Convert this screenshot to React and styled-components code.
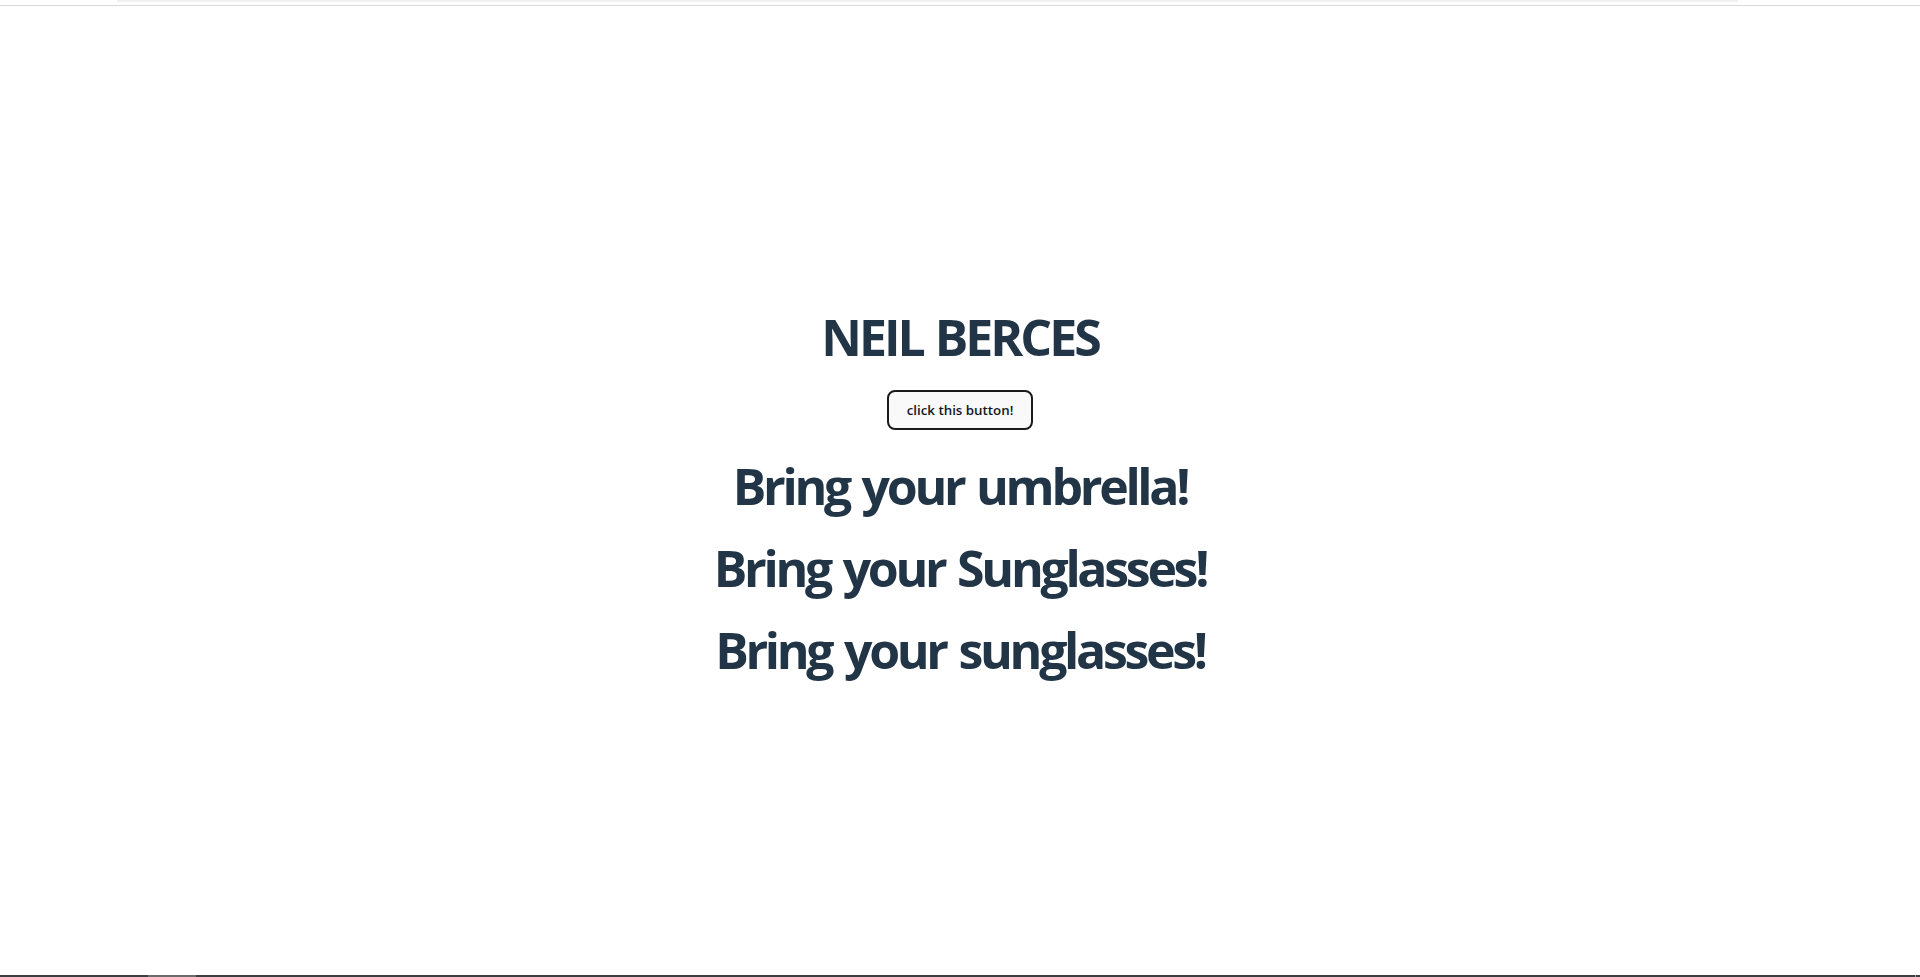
import React, { useState } from "react";
import styled, { createGlobalStyle } from "styled-components";

const Global = createGlobalStyle`
  html, body { margin: 0; padding: 0; background: #ffffff; }
  body { font-family: "Open Sans", "Noto Sans", sans-serif; color: #213547; }
  * { box-sizing: border-box; }
`;

const Page = styled.div`
  display: flex;
  flex-direction: column;
  height: 977px;
  overflow: hidden;
`;

const TopBar = styled.div`
  height: 6px;
  padding: 0 182px 0 117px;
  border-bottom: 1px solid #d9d9d9;
  flex: none;
`;

const TopStrip = styled.div`
  height: 2px;
  background: #f1f1f1;
`;

const Main = styled.main`
  flex: 1;
  display: flex;
  flex-direction: column;
  align-items: center;
  justify-content: center;
  padding-top: 5px;
`;

const Title = styled.h1`
  margin: 0;
  font-family: "Open Sans", "Noto Sans", sans-serif;
  font-size: 50px;
  letter-spacing: -3px;
  word-spacing: 2px;
  line-height: 60px;
  font-weight: 700;
  color: #213547;
`;

const Button = styled.button`
  margin-top: 23px;
  font-family: "Open Sans", "Noto Sans", sans-serif;
  font-size: 13.33px;
  font-weight: 600;
  color: #111827;
  background: #f9f9f9;
  border: 2px solid #1a1a1a;
  border-radius: 8px;
  padding: 0 18px;
  height: 40px;
  cursor: pointer;
`;

const Messages = styled.div`
  margin-top: 26px;
  display: flex;
  flex-direction: column;
  align-items: center;
  gap: 22px;
`;

const Message = styled.h2`
  margin: 0;
  font-family: "Open Sans", "Noto Sans", sans-serif;
  font-size: 50px;
  letter-spacing: -3.3px;
  word-spacing: 3px;
  line-height: 60px;
  font-weight: 700;
  color: #213547;
`;

const BottomBar = styled.div`
  height: 2px;
  flex: none;
  display: flex;
  background: #3c3f41;
`;

const Thumb = styled.div`
  margin-left: ${(p) => p.$left}px;
  width: ${(p) => p.$width}px;
  background: ${(p) => p.$color};
`;

export default function App() {
  const [count, setCount] = useState(0);
  return (
    <Page>
      <Global />
      <TopBar>
        <TopStrip />
      </TopBar>
      <Main>
        <Title>NEIL BERCES</Title>
        <Button onClick={() => setCount(count + 1)}>click this button!</Button>
        <Messages>
          <Message>Bring your umbrella!</Message>
          <Message>Bring your Sunglasses!</Message>
          <Message>Bring your sunglasses!</Message>
        </Messages>
      </Main>
      <BottomBar>
        <Thumb $left={148} $width={48} $color="#6b6b6b" />
        <Thumb $left={1719} $width={1} $color="#9a9a9a" />
      </BottomBar>
    </Page>
  );
}
